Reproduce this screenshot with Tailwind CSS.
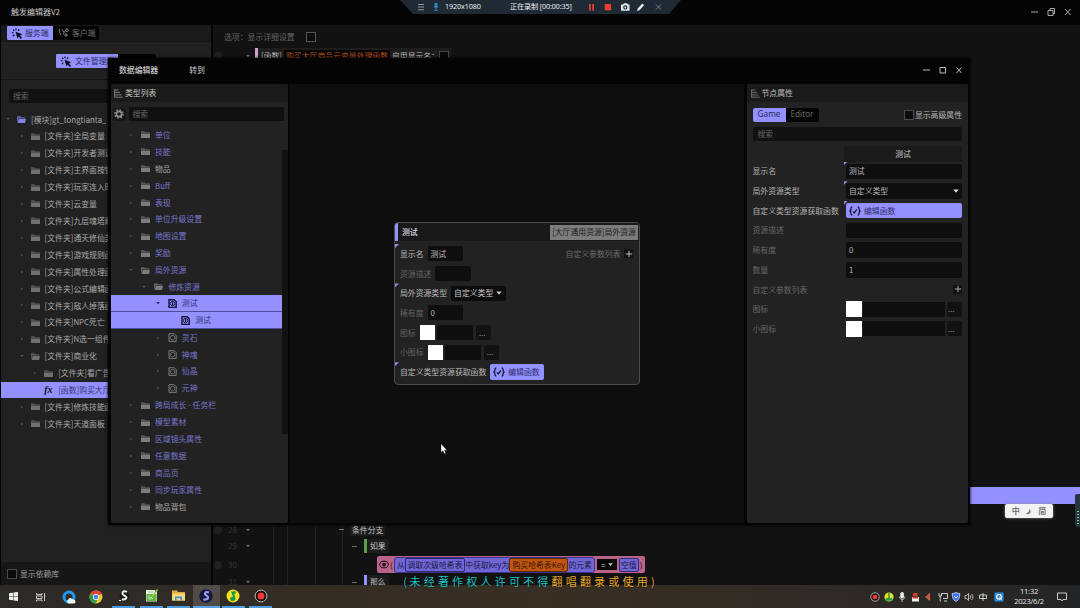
<!DOCTYPE html>
<html lang="zh-CN">
<head>
<meta charset="utf-8">
<title>触发编辑器V2</title>
<script src="https://cdn.jsdelivr.net/npm/@tailwindcss/browser@4"></script>
</head>
<body class="relative w-[1080px] h-[608px] overflow-hidden bg-[#050505] font-['Noto_Sans_CJK_SC',sans-serif] text-[7.85px] leading-none text-[#b4b4b4] whitespace-nowrap">
<svg class="hidden">
  <symbol id="folder" viewBox="0 0 9 9"><path d="M0 1.2h3.3l1 1H8.6v.9H0z" fill="currentColor" opacity=".6"/><path d="M0 3.4h9V8H0z" fill="currentColor"/></symbol>
  <symbol id="folderOpen" viewBox="0 0 9 9"><path d="M0 1.2h3.3l1 1H8v1H1.6L.6 6.5 0 7z" fill="currentColor" opacity=".7"/><path d="M1.9 3.7H9L8 8H.6z" fill="currentColor"/></symbol>
  <symbol id="doc" viewBox="0 0 9 9"><path d="M1 .7h5.2L8.2 2.7V8.4H1z" fill="none" stroke="currentColor" stroke-width="1"/><circle cx="4.6" cy="4.7" r="2.3" fill="none" stroke="currentColor" stroke-width=".8"/></symbol>
  <symbol id="docEye" viewBox="0 0 9 9"><path d="M1 .7h5.2L8.2 2.7V8.4H1z" fill="none" stroke="currentColor" stroke-width="1.4"/><circle cx="4.6" cy="4.6" r="2.2" fill="none" stroke="currentColor" stroke-width="1"/><path d="M4.6 3.2v2.8" stroke="currentColor" stroke-width="1.2"/></symbol>
  <symbol id="right" viewBox="0 0 4 4"><path d="M1.2.6 3 2 1.2 3.4z" fill="currentColor"/></symbol>
  <symbol id="down" viewBox="0 0 4 4"><path d="M.2 1h3.6L2 3.2z" fill="currentColor"/></symbol>
  <symbol id="click" viewBox="0 0 12 12"><path d="M4.4 4.2 11.8 6.800 9.300 8.2l2.200 2.600-1.400 1.100-2.100-2.700-1.500 2.300z" fill="currentColor"/><path d="M4.9.6v1.9M1.700 1.700l1.400 1.500M.3 5.2h2M1.400 8.9l1.700-1.600M8.400 1.600 7 3" stroke="currentColor" stroke-width="1.3" fill="none"/></symbol>
  <symbol id="braces" viewBox="0 0 12 10"><path d="M3.4.8C2 .8 2 1.5 2 2.6 2 4 1.8 4.7.6 5 1.8 5.3 2 6 2 7.4c0 1.1 0 1.8 1.4 1.8M8.6.8C10 .8 10 1.5 10 2.6c0 1.4.2 2.1 1.4 2.4C10.2 5.3 10 6 10 7.4c0 1.1 0 1.8-1.4 1.8M4 5.3l1.3 1.6 2.6-3.5" fill="none" stroke="currentColor" stroke-width="1.3"/></symbol>
  <symbol id="list" viewBox="0 0 9 9"><path d="M.6.5v7.9M.6 1h4M.6 3.4h5.5M.6 5.9h7M.6 8.2h8.2" stroke="currentColor" stroke-width=".9" fill="none"/></symbol>
  <symbol id="plus" viewBox="0 0 8 8"><path d="M4 .8v6.400M.8 4h6.400" stroke="currentColor" stroke-width="1" fill="none"/></symbol>
</svg>

<!-- main window -->
<div class="flex flex-col w-[1080px] h-[585px]">
  <header class="flex items-center h-[25px] pl-[11px] pr-[8px] pb-[1px] text-[8px] text-[#c9c9c9]">
    <span>触发编辑器V2</span>
    <svg class="ml-auto w-[42px] h-[10px]" viewBox="0 0 42 10" fill="none" stroke="#aaa" stroke-width="1"><path d="M1 5h7M18 3.5h5v5h-5zM20 3.5V1.5h4.500v5H23M35 2l5.500 6M40.500 2 35 8"/></svg>
  </header>
  <div class="flex flex-1 min-h-0">
    <aside class="flex flex-col w-[210px] ml-[1px] bg-[#212121] shrink-0">
      <div class="flex items-start h-[17px] pl-[6px] pt-[1px] bg-[#1a1a1a] border-b border-[#151515]">
        <div class="flex items-center gap-[2px] w-[46px] h-[14px] pl-[4px] bg-[#9391ff] text-[#2b2a5c] rounded-l-[1px]"><svg class="w-[12px] h-[11px] text-[#0b0b20]"><use href="#click"/></svg>服务端</div>
        <div class="flex items-center gap-[3px] w-[46px] h-[14px] pl-[5px] bg-[#030303] text-[#707070] rounded-r-[2px]"><svg class="w-[11px] h-[10px]" viewBox="0 0 11 10" fill="none" stroke="#888" stroke-width=".9"><path d="M1.500 1C.5 3.500 2 5 3 7M4 1.500l2 3M8 1.500l-3 5M8 5v4M6 7h4"/><circle cx="9" cy="2.300" r="1.300"/></svg>客户端</div>
      </div>
      <div class="flex items-start h-[38px] pt-[12px] pl-[55px] border-b border-[#151515]">
        <div class="flex items-center gap-[3px] w-[62px] h-[14px] pl-[4px] bg-[#9391ff] text-[#2b2a5c] rounded-l-[1px]"><svg class="w-[12px] h-[11px] text-[#0b0b20]"><use href="#click"/></svg>文件管理器</div>
        <div class="w-[38px] h-[14px] bg-[#030303] rounded-r-[2px]"></div>
      </div>
      <div class="flex items-center h-[14px] mt-[9px] ml-[8px] mr-[6px] pl-[4px] bg-[#111] text-[#666] rounded-[2px]">搜索</div>
      <div id="files" class="mt-[8px] flex-1 overflow-hidden text-[#a9a9a9]"></div>
      <div class="flex items-center gap-[3px] h-[23px] pl-[6px] bg-[#161616] text-[#a0a0a0]"><span class="w-[10px] h-[10px] border border-[#4a4a4a] bg-[#0b0b0b]"></span>显示依赖库</div>
    </aside>

    <main class="flex flex-col flex-1 min-w-0 ml-[2px] bg-[#121212] overflow-hidden">
      <div class="flex items-center h-[23px] pl-[11px] text-[#666]"><span>选项：</span><span>显示详细设置</span><span class="w-[10px] h-[10px] ml-[11px] border border-[#555] bg-[#0c0c0c]"></span></div>
      <div class="flex items-center h-[16px]">
        <span class="w-[8px] h-[8px] ml-[1px] rounded-full bg-[#202020]"></span>
        <svg class="w-[4px] h-[4px] ml-[24px] text-[#777]"><use href="#down"/></svg>
        <div class="flex items-center h-[16px] ml-[5px] pl-[3px] w-[196px] border-l-[3px] border-[#d2a0d0] bg-[#1d1d1d] text-[#bbb]">[函数]<span class="flex items-center justify-center w-[106px] h-[13px] mx-[2px] bg-[#050505] text-[#b4501c]">购买大厅商品云变量处理函数</span>启用显示名：<span class="w-[10px] h-[10px] border border-[#444] bg-[#080808]"></span></div>
      </div>
      <div class="flex flex-1 items-end"><div class="w-full h-[17px] bg-[#9391ff]"></div></div>
      <div class="h-[17px]"></div>
      <div class="grid grid-cols-[60px_14px_28px_27px_13px_1fr] h-[64px] text-[#353535]">
        <div class="flex flex-col">
          <div class="flex items-center h-[17px]"><span class="w-[8px] h-[8px] ml-[1px] mr-[6px] rounded-full bg-[#202020]"></span><span class="w-[14px] text-[8px]">28</span><svg class="w-[4px] h-[4px] ml-[4px] text-[#777]"><use href="#down"/></svg></div>
          <div class="flex items-center h-[16px] pl-[15px]"><span class="w-[14px] text-[8px]">29</span><svg class="w-[4px] h-[4px] ml-[4px] text-[#777]"><use href="#down"/></svg></div>
          <div class="flex items-center h-[21px]"><span class="w-[8px] h-[8px] ml-[1px] mr-[6px] rounded-full bg-[#202020]"></span><span class="text-[8px]">30</span></div>
          <div class="flex items-center h-[14px] pl-[15px]"><span class="w-[14px] text-[8px]">31</span><svg class="w-[4px] h-[4px] ml-[4px] text-[#777]"><use href="#down"/></svg></div>
        </div>
        <div class="border-l border-[#222]"></div><div class="border-l border-[#222]"></div><div class="border-l border-[#222]"></div><div class="border-l border-[#222]"></div>
        <div class="flex flex-col -ml-[16px] text-[#c4c4c4]">
          <div class="flex items-center h-[17px]"><span class="w-[5px] h-px bg-[#777]"></span><span class="ml-[6px] bg-[#1d1d1d] px-[2px] py-[3px]">条件分支</span></div>
          <div class="flex items-center h-[16px] pl-[13px]"><span class="w-[5px] h-px bg-[#666]"></span><span class="flex items-center h-[14px] ml-[7px] pl-[3px] pr-[3px] border-l-[3px] border-[#5d9c4b] bg-[#1d1d1d]">如果</span></div>
          <div class="flex items-center h-[21px] pl-[38px] text-[#1d1b45]">
            <div class="flex items-center w-[268px] h-[17px] px-[2px] bg-[#b9628a] rounded-[2px]">
              <svg class="w-[10px] h-[9px] shrink-0" viewBox="0 0 10 9" fill="none" stroke="#1b0b16"><ellipse cx="5" cy="4.500" rx="4.300" ry="3.300"/><circle cx="5" cy="4.500" r="1.400" fill="#1b0b16"/></svg>
              <span class="w-[3px] ml-[1px] mr-[1px] text-[#1b0b16]">(</span>
              <div class="flex items-center justify-between shrink-0 w-[201px] h-[16px] px-[2px] bg-[#7166d6] border border-[#3a348c] rounded-[3px]">从<span class="flex items-center px-[1.5px] h-[14px] border border-[#2e2972] rounded-[2px]">调取次级哈希表</span>中获取key为<span class="flex items-center px-[2px] h-[14px] bg-[#c3560f] border border-[#5a2808] rounded-[2px] text-[#3a1603]">购买哈希表Key</span>的元素</div>
              <div class="flex items-center justify-center gap-[2px] w-[20px] h-[11px] mx-[2px] bg-[#080808] text-[#ccc]"><span>=</span><svg class="w-[5px] h-[5px]"><use href="#down"/></svg></div>
              <span class="flex items-center h-[14px] px-[1px] bg-[#7166d6] border border-[#2e2972] rounded-[2px]">空值</span><span class="ml-[1px] text-[#1b0b16]">)</span>
            </div>
          </div>
          <div class="flex items-center h-[14px] pl-[13px]"><span class="w-[5px] h-px bg-[#666]"></span><span class="flex items-center h-[14px] ml-[7px] pl-[3px] pr-[3px] border-l-[3px] border-[#9391ff] bg-[#1d1d1d]">那么</span></div>
        </div>
      </div>
    </main>
  </div>
</div>

<!-- taskbar -->
<footer class="flex h-[23px] w-[1080px] bg-linear-to-r from-[#2c2a27] via-[#392f24] to-[#242526]">
  <div class="flex w-[275px] shrink-0">
    <div class="flex items-center justify-center w-[27px]"><svg class="w-[9px] h-[9px]" viewBox="0 0 9 9" fill="#eee"><path d="M0 1.300 4 .7v3.500H0zM4.500.6 9 0v4.200H4.500zM0 4.700h4v3.600L0 7.700zM4.500 4.700H9V9l-4.500-.6z"/></svg></div>
    <div class="flex items-center justify-center w-[27.500px]"><svg class="w-[10px] h-[10px]" viewBox="0 0 10 10" fill="none" stroke="#ddd" stroke-width=".9"><path d="M.5 1v1.500h5.500V1M.5 4h5.500v2.500H.5zM.5 9.500V8h5.500v1.500M8.500 1v8M8 4h1.500"/></svg></div>
    <div class="flex items-center justify-center w-[28px]"><svg class="w-[14px] h-[14px]" viewBox="0 0 14 14"><circle cx="7" cy="7" r="5" fill="none" stroke="#1f9af0" stroke-width="3"/><path d="M6.500 9.500c.3-2 3-2 3.500-.2 2-.5 3.500.8 3.500 2.200s-1 2-2 2H7c-2.300-.2-2.300-3.500-.5-4z" fill="#f4f4f4"/></svg></div>
    <div class="flex items-center justify-center w-[27.500px]"><svg class="w-[14px] h-[14px]" viewBox="0 0 14 14"><circle cx="7" cy="7" r="6.500" fill="#f4c430"/><path d="M7 7 1.400 3.700A6.500 6.500 0 0 1 12.600 3.700z" fill="#dc4437"/><path d="M7 7 1.400 3.700A6.500 6.500 0 0 0 6.500 13.500L9 9z" fill="#2f9e4f"/><circle cx="7" cy="7" r="3" fill="#fff"/><circle cx="7" cy="7" r="2.300" fill="#4285f4"/></svg></div>
    <div class="flex items-center justify-center w-[27.500px]"><div class="flex flex-col items-center justify-center w-[23px] h-full border-b-2 border-[#4f9be0]"><svg class="w-[12px] h-[12px]" viewBox="0 0 12 12"><circle cx="6.500" cy="6" r="5" fill="#191919"/><path d="M9 2C5-.2 2.500 3.500 6.500 5.600S7.500 10 3.800 9.300" fill="none" stroke="#eee" stroke-width="1.900"/><path d="M1 10.500h2" stroke="#eee"/></svg></div></div>
    <div class="flex items-center justify-center w-[27.500px]"><div class="flex items-center justify-center w-[23px] h-full border-b-2 border-[#4f9be0]"><svg class="w-[13px] h-[13px]" viewBox="0 0 13 13"><path d="M1 1h9v2h2v9.500H1z" fill="#e8eed8"/><path d="M1.500 5h10v7h-10z" fill="#62b445"/><path d="M3 3h5" stroke="#8a9" stroke-width=".7"/><path d="M12.500.5 7 7.500" stroke="#9ccf50" stroke-width="1.300"/><path d="M4 6.500v3.500h2V8l2 2" fill="none" stroke="#dff5c0" stroke-width=".8"/></svg></div></div>
    <div class="flex items-center justify-center w-[27.500px]"><div class="flex items-center justify-center w-[23px] h-full border-b-2 border-[#4f9be0]"><svg class="w-[13px] h-[11px]" viewBox="0 0 13 11"><path d="M0 .5h5l1 1.500h7v8.500H0z" fill="#e2ad3a"/><path d="M0 3.500h13v7H0z" fill="#f8d978"/><path d="M3 6.500h7v4H8.500V8.300h-4v2.200H3z" fill="#3b94d9"/></svg></div></div>
    <div class="flex items-center justify-center w-[27px] bg-[#514c47] border-b-2 border-[#5aa5e8]"><svg class="w-[14px] h-[14px]" viewBox="0 0 13 13"><circle cx="6.500" cy="6.500" r="6.300" fill="#15183c"/><path d="M9.300 3.300C6 1.800 4 4.500 7 6.200S8 10.300 4 9.700" fill="none" stroke="#9a9cf5" stroke-width="2"/></svg></div>
    <div class="flex items-center justify-center w-[27.500px]"><div class="flex items-center justify-center w-[23px] h-full border-b-2 border-[#4f9be0]"><svg class="w-[14px] h-[14px]" viewBox="0 0 14 14"><circle cx="7" cy="7" r="6.500" fill="#f5df20"/><path d="M5 2.500c1.500.2 3 0 4-1L10 4l-1.800 1.300L9.500 9c.2 4-5.700 4-5.400.8C4.300 8.400 5.600 7.600 7 7.800L6 5z" fill="#14994a"/></svg></div></div>
    <div class="flex items-center justify-center w-[27.500px]"><div class="flex items-center justify-center w-[23px] h-full border-b-2 border-[#4f9be0]"><svg class="w-[14px] h-[14px]" viewBox="0 0 14 14"><circle cx="7" cy="7" r="5.900" fill="#120c0c" stroke="#c9c9c9" stroke-width=".9"/><circle cx="7" cy="7" r="3.500" fill="#f03a34"/></svg></div></div>
  </div>
  <div class="flex items-center ml-auto pr-[13px]">
    <svg class="w-[136px] h-[12px]" viewBox="868 0 136 12">
      <circle cx="875" cy="6" r="4.200" fill="#150d0d" stroke="#ccc" stroke-width=".8"/><circle cx="875" cy="6" r="2.300" fill="#ee3b36"/>
      <circle cx="889" cy="6" r="4.600" fill="#e5dc2b"/><path d="M889 2v6M886 9c0-2 6-2 6 0z" stroke="#2a9c48" stroke-width="1.500" fill="#2a9c48"/>
      <rect x="900.300" y="1" width="3.600" height="6.500" rx="1.800" fill="#eee"/><path d="M899.500 5.500c0 4 5.300 4 5.300 0M902 8.500v2.500" stroke="#ddd" fill="none" stroke-width=".8"/>
      <path d="M913 2h4.500v3H913z" fill="#d43b2d"/><path d="M912 6h7v4.500h-7z" fill="#eee"/><path d="M912.500 5.500h5.500v2h-5.500z" fill="#d43b2d"/>
      <path d="M925 6l5-4v8z" fill="#e2604c"/><path d="M928 4v4" stroke="#752" />
      <path d="M941.500 2.500h6v5h-4.500M944 10h3M939 2v3h2.500V2M940.200 5v5.500" stroke="#ddd" fill="none" stroke-width=".9"/>
      <path d="M956 1.500c1.500.8 2.500 1 3.800 1 0 4-1 6.500-3.800 8-2.800-1.500-3.800-4-3.800-8 1.300 0 2.300-.2 3.800-1z" fill="#3a6ff0" stroke="#d8e2ff" stroke-width=".8"/><path d="m954 5 2 2 2-2" stroke="#fff" fill="none"/>
      <path d="M965 4.500h1.500l2-2v7l-2-2H965zM970 4.200c1 1 1 2.600 0 3.600M971.700 3c1.600 1.800 1.600 4.200 0 6" stroke="#ddd" fill="none" stroke-width=".8"/>
      <path d="M979.500 4h7v3.500h-7zM983 2v8" stroke="#ddd" fill="none" stroke-width=".9"/>
      <rect x="994.500" y="1.500" width="9" height="9" rx="1" fill="#2c8de0"/><circle cx="999" cy="5.800" r="2.300" fill="none" stroke="#fff" stroke-width="1.100"/><path d="m999.500 6.500 2 2.300" stroke="#fff"/>
    </svg>
    <div class="flex flex-col items-center gap-[3px] w-[50px] text-[7.500px] text-[#e6e6e6] font-['Open_Sans',sans-serif] tracking-[-0.2px]"><span>11:32</span><span>2023/6/2</span></div>
    <svg class="w-[10px] h-[10px] ml-[3px]" viewBox="0 0 10 10" fill="none" stroke="#ddd" stroke-width=".9"><path d="M.5 1h9v6.500H6L5 9 4 7.500H.5z"/></svg>
  </div>
</footer>

<!-- data editor window -->
<section class="absolute left-[108px] top-[58px] w-[862px] h-[467px] flex flex-col bg-[#040404] shadow-[0_0_3px_#000]">
  <header class="flex items-center h-[24px] pl-[11px] pr-[7px] text-[#cfcfcf]">
    <span class="font-medium">数据编辑器</span><span class="ml-[31px]">转到</span>
    <svg class="ml-auto w-[40px] h-[8px]" viewBox="0 0 40 8" fill="none" stroke="#bbb" stroke-width="1"><path d="M0 4h7M17 1.500h5.500v5.500h-5.500zM33.500 1.500l5 5.500M38.500 1.500 33.500 7"/></svg>
  </header>
  <div class="flex flex-1 min-h-0 pl-[3px] pr-[2px] pb-[2px] gap-[2.500px] pt-[2px]">
    <div class="flex flex-col w-[176.500px] shrink-0 bg-[#222] rounded-[2px] overflow-hidden">
      <div class="flex items-center gap-[2px] h-[18px] pl-[3px] bg-[#1a1a1a] text-[#c2c2c2]"><svg class="w-[9px] h-[9px] text-[#888]"><use href="#list"/></svg>类型列表</div>
      <div class="flex items-center h-[14px] mt-[5px] pl-[1.5px] pr-[4px]">
        <span class="flex items-center justify-center w-[13px] h-[13px] bg-[#171717] rounded-[2px]"><svg class="w-[10px] h-[10px]" viewBox="0 0 10 10" fill="none"><circle cx="5" cy="5" r="2.700" stroke="#909090" stroke-width="1.800"/><circle cx="5" cy="5" r="4.200" stroke="#909090" stroke-width="1.200" stroke-dasharray="1.700 1.600"/></svg></span>
        <span class="flex items-center flex-1 h-[14px] ml-[3px] pl-[4px] bg-[#101010] text-[#686868] rounded-[1px]">搜索</span>
      </div>
      <div class="flex flex-1 min-h-0 mt-[5.5px]">
        <div id="types" class="w-[171px]"></div>
        <div class="flex-1 pt-[23.5px]"><div class="h-[284px] bg-[#111]"></div></div>
      </div>
    </div>

    <div class="flex-1 flex bg-[#0e0e0e] pl-[104px] pt-[138px]">
      <div class="flex flex-col w-[246px] h-[163px] border-[1.500px] border-[#4b4b4b] rounded-[4px] bg-[#222] overflow-hidden">
        <div class="flex items-center h-[18px] border-l-[3px] border-[#9391ff] bg-[#191919] shrink-0 text-[#d8d8d8] pl-[4px] pr-[1px] font-medium">测试<span class="flex items-center justify-center w-[88px] h-[15px] ml-auto bg-[#7c7c7c] text-[#1c1c1c] font-normal">[大厅通用资源]局外资源</span></div>
        <div id="node" class="pt-[3px]"></div>
      </div>
    </div>

    <div class="flex flex-col w-[221.500px] shrink-0 bg-[#222] rounded-[2px] overflow-hidden">
      <div class="flex items-center gap-[2px] h-[18px] pl-[4px] bg-[#1a1a1a] text-[#c2c2c2] shrink-0"><svg class="w-[9px] h-[9px] text-[#777]"><use href="#list"/></svg>节点属性</div>
      <div class="flex items-center h-[15px] mt-[5px] pl-[6px] pr-[6px] font-['Noto_Sans','Noto_Sans_CJK_SC',sans-serif]">
        <span class="flex items-center justify-center w-[33px] h-[14px] bg-[#9391ff] text-[#2b2a5c] text-[8.200px] rounded-l-[2px]">Game</span><span class="flex items-center justify-center w-[33px] h-[14px] bg-[#030303] text-[#666] text-[8.200px] rounded-r-[2px]">Editor</span>
        <span class="w-[10px] h-[10px] ml-auto mr-[1px] border border-[#4a4a4a] bg-[#0c0c0c]"></span><span class="font-['Noto_Sans_CJK_SC',sans-serif]">显示高级属性</span>
      </div>
      <div class="flex items-center h-[13.500px] mt-[5px] ml-[6px] mr-[6px] pl-[5px] bg-[#111] text-[#666] rounded-[2px]">搜索</div>
      <div class="flex h-[16px] mt-[5px] pr-[6px] justify-end"><span class="flex items-center justify-center w-[118px] bg-[#1a1a1a] text-[#c8c8c8]">测试</span></div>
      <div id="props"></div>
    </div>
  </div>
</section>

<!-- recorder bar -->
<div class="absolute left-[400px] top-0 w-[281px] h-[14px] flex items-center pl-[17px] pr-[18px] bg-[#202a34] [clip-path:polygon(0_0,100%_0,269px_100%,13px_100%)] font-['Noto_Sans','Noto_Sans_CJK_SC',sans-serif] text-[7.200px] text-[#e8eef2]">
  <svg class="w-[8px] h-[8px]" viewBox="0 0 8 8" stroke="#a8b2ba" stroke-width=".8"><path d="M1 1.500h6M1 4h6M1 6.800h6"/></svg>
  <svg class="w-[6px] h-[8px] ml-[8px]" viewBox="0 0 6 8"><path d="M1.500 0h3v3l1 1.500h-5l1-1.500zM2.500 4.500h1V8h-1zM1 7h4v.8H1z" fill="#2d86c8"/></svg>
  <span class="ml-[6px] tracking-[-0.100px] w-[36px]">1920x1080</span>
  <span class="ml-[29px] w-[64px] tracking-[-0.150px]">正在录制 [00:00:35]</span>
  <svg class="w-[76px] h-[10px] ml-auto" viewBox="587 0 76 10"><path d="M589 2h1.800v6.500H589zM592.200 2h1.800v6.500h-1.800z" fill="#e8402f"/><path d="M604.800 2h6.300v6.300h-6.300z" fill="#e8402f"/><path d="M621 2.500h2l1-1.300h3l1 1.300h1.500v6.200H621z" fill="#dfe5e8"/><circle cx="625.300" cy="5.400" r="2.100" fill="#202a34"/><circle cx="625.300" cy="5.400" r="1" fill="#dfe5e8"/><path d="M637 9l.7-2.500 4.600-5 1.800 1.700-4.600 5z" fill="#dfe5e8"/><path d="m656 2.500 5 5M661 2.500l-5 5" stroke="#8a949c" stroke-width=".8"/></svg>
</div>

<!-- input method toolbar and level meter -->
<div class="absolute left-[1005px] top-[504px] w-[48px] h-[14px] flex items-center justify-around px-[4px] bg-[#f2f2f2] rounded-[2px] text-[#777] text-[8px] font-bold shadow-[0_0_3px_#888]"><span>中</span><svg class="w-[7px] h-[7px]" viewBox="0 0 7 7"><path d="M4 .5c.8 2.800-.5 4.500-3.500 5C4 8 8 4 4 .5z" fill="#777"/></svg><span>简</span></div>
<div class="absolute left-[1075px] top-[494px] w-[5px] h-[33px] bg-[#27363e] rounded-l-[2px] pt-[17px] pl-[1.500px]"><div class="w-[2px] h-[14px] bg-[repeating-linear-gradient(#7fd0a0_0_1px,#27363e_1px_3px)]"></div></div>

<!-- caption over the desktop -->
<div class="absolute left-[395px] top-[574px] h-[14px] flex items-center text-[11px] tracking-[3.200px] text-[#1fc4c9] [text-shadow:0_0_1px_#000]"><span class="w-[12px] text-right tracking-normal">(</span><span class="ml-[2.5px]">未经著作权人许可不得</span><span class="text-[#e8a92c]">翻唱翻录或使用)</span></div>

<svg class="absolute left-[440px] top-[443px] w-[8px] h-[12px]" viewBox="0 0 8 12"><path d="M1 .8v8.700l2-1.800 1.300 3 1.500-.6L4.500 7.200H7z" fill="#fff" stroke="#111" stroke-width=".4"/></svg>

<script>
const icon = (id, cls) => `<svg class="${cls}"><use href="#${id}"/></svg>`;

// [depth, icon, arrow, label, state]
const fileRows = [
  [0,'folderOpen','down','[模块]gt_tongtianta_','root'],
  [1,'folder','right','[文件夹]全局变量'],[1,'folder','right','[文件夹]开发者测试'],[1,'folder','right','[文件夹]主界面按钮'],
  [1,'folder','right','[文件夹]玩家连入时'],[1,'folder','right','[文件夹]云变量'],[1,'folder','right','[文件夹]九层魂塔刷'],
  [1,'folder','right','[文件夹]通天修仙类'],[1,'folder','right','[文件夹]游戏规则函'],[1,'folder','right','[文件夹]属性处理函'],
  [1,'folder','right','[文件夹]公式编辑函'],[1,'folder','right','[文件夹]敌人掉落函'],[1,'folder','right','[文件夹]NPC死亡'],
  [1,'folder','right','[文件夹]N选一组件'],[1,'folderOpen','down','[文件夹]商业化'],[2,'folder','right','[文件夹]看广告'],
  [2,'fx','','[函数]购买大厅','sel'],[1,'folder','right','[文件夹]修炼技能函'],[1,'folder','right','[文件夹]天道面板']
];
document.getElementById('files').innerHTML = fileRows.map(([d,ic,ar,t,s]) => `
  <div class="flex items-center h-[16.92px] ${s==='sel' ? 'bg-[#9391ff] text-[#3a3874]' : ''}" style="padding-left:${5+d*13.6}px">
    <span class="w-[11px] flex text-[#555]">${ar ? icon(ar,'w-[4px] h-[4px]') : ''}</span>
    ${ic==='fx' ? `<span class="w-[9px] font-['Liberation_Serif',serif] italic font-bold text-[10px] text-[#101030]">fx</span>` : icon(ic, s==='root' ? 'w-[9px] h-[9px] text-[#8583ea]' : 'w-[9px] h-[9px] text-[#707070]')}
    <span class="ml-[5px]">${t}</span>
  </div>`).join('');

const typeRows = [
  [0,'folder','right','单位'],[0,'folder','right','技能'],[0,'folder','right','物品','plain'],[0,'folder','right','Buff'],
  [0,'folder','right','表现'],[0,'folder','right','单位升级设置'],[0,'folder','right','地图设置'],[0,'folder','right','奖励'],
  [0,'folderOpen','down','局外资源'],[1,'folderOpen','down','修炼资源'],[2,'docEye','down','测试','sel'],[3,'docEye','','测试','sel'],
  [2,'doc','right','灵石'],[2,'doc','right','神魂'],[2,'doc','right','仙晶'],[2,'doc','right','元神'],
  [0,'folder','right','跨局成长 - 任务栏'],[0,'folder','right','模型素材'],[0,'folder','right','区域镜头属性'],[0,'folder','right','任意数据'],
  [0,'folder','right','商品页'],[0,'folder','right','同步玩家属性'],[0,'folder','right','物品背包','plain']
];
document.getElementById('types').innerHTML = typeRows.map(([d,ic,ar,t,s]) => `
  <div class="flex items-center h-[16.9px] ${s==='sel' ? 'bg-[#9391ff] text-[#34326e] border-b border-[#4f4d99]' : s==='plain' ? 'text-[#a9a9a9]' : 'text-[#7a76cc]'}" style="padding-left:${18+d*13.4}px">
    <span class="w-[12px] flex ${s==='sel' ? 'text-[#222055]' : 'text-[#555]'}">${ar ? icon(ar,'w-[4px] h-[4px]') : ''}</span>
    ${icon(ic, s==='sel' ? 'w-[9px] h-[9px] text-[#15133a]' : 'w-[9px] h-[9px] text-[#7c7c7c]')}
    <span class="ml-[5px]">${t}</span>
  </div>`).join('');

const mark = '<span class="self-start w-[4px] h-[4px] bg-[#8f8de8] [clip-path:polygon(0_0,100%_0,0_100%)]"></span>';
const noMark = '<span class="w-[4px]"></span>';
const nodeRows = [
  [1,'显示名','<span class="flex items-center w-[35px] h-[15px] ml-[4px] pl-[3px] bg-[#0e0e0e] rounded-[2px]">测试</span><span class="ml-auto text-[#6a6a6a]">自定义参数列表</span><span class="flex items-center justify-center w-[9px] h-[9px] ml-[3.500px] mr-[6px] bg-[#111] text-[#bbb]">'+icon('plus','w-[8px] h-[8px]')+'</span>'],
  [0,'资源描述','<span class="w-[36px] h-[15px] ml-[4px] bg-[#0e0e0e] rounded-[2px]"></span>'],
  [1,'局外资源类型','<span class="flex items-center gap-[3px] w-[55px] h-[15px] ml-[4px] pl-[3px] bg-[#0c0c0c] text-[#c8c8c8] rounded-[2px]">自定义类型'+icon('down','w-[6px] h-[6px]')+'</span>'],
  [0,'稀有度','<span class="flex items-center w-[35px] h-[15px] ml-[4px] pl-[3px] bg-[#0e0e0e] text-[#b4b4b4] rounded-[2px]">0</span>'],
  [0,'图标','<span class="w-[15.500px] h-[15.500px] ml-[4px] bg-white"></span><span class="w-[36px] h-[15px] ml-[2px] bg-[#0e0e0e]"></span><span class="flex items-center justify-center w-[15px] h-[15px] ml-[2.500px] bg-[#121212] text-[#999] rounded-[2px] pr-[2px]">...</span>'],
  [0,'小图标','<span class="w-[15.500px] h-[15.500px] ml-[4px] bg-white"></span><span class="w-[36px] h-[15px] ml-[2px] bg-[#0e0e0e]"></span><span class="flex items-center justify-center w-[15px] h-[15px] ml-[2.500px] bg-[#121212] text-[#999] rounded-[2px] pr-[2px]">...</span>'],
  [1,'自定义类型资源获取函数','<span class="flex items-center gap-[3px] w-[54px] h-[15.500px] ml-[4px] pl-[3px] bg-[#9391ff] text-[#2f2d68] rounded-[2px]">'+icon('braces','w-[12px] h-[10px] text-[#15133a]')+'编辑函数</span>']
];
document.getElementById('node').innerHTML = nodeRows.map(([on,label,body]) => `
  <div class="flex items-center h-[19.7px] ${on ? 'text-[#b8b8b8]' : 'text-[#626262]'}">${on ? mark : noMark}<span class="ml-[1px]">${label}</span>${body}</div>`).join('');

const field = (inner) => `<span class="flex items-center w-[116px] h-[15.5px] pl-[3px] bg-[#0e0e0e] text-[#b4b4b4] rounded-[2px]">${inner}</span>`;
const picker = '<span class="w-[15.5px] h-[15.5px] bg-white"></span><span class="w-[82px] h-[15px] ml-[1.5px] bg-[#0e0e0e]"></span><span class="flex items-center w-[15px] h-[15px] ml-[2px] pl-[1px] bg-[#121212] text-[#999] rounded-[2px]">...</span>';
const propRows = [
  [1,'显示名',field('测试')],
  [1,'局外资源类型',field('自定义类型'+icon('down','w-[6px] h-[6px] ml-auto mr-[3px] text-[#ddd]'))],
  [1,'自定义类型资源获取函数','<span class="flex items-center gap-[3px] w-[116px] h-[15.5px] pl-[3px] bg-[#9391ff] text-[#2f2d68] rounded-[2px]">'+icon('braces','w-[12px] h-[10px] text-[#15133a]')+'编辑函数</span>'],
  [0,'资源描述',field('')],[0,'稀有度',field('0')],[0,'数量',field('1')],
  [0,'自定义参数列表','<span class="flex items-center justify-center w-[9px] h-[9px] ml-auto bg-[#111] text-[#aaa]">'+icon('plus','w-[8px] h-[8px]')+'</span>'],
  [0,'图标',picker],[0,'小图标',picker]
];
document.getElementById('props').innerHTML = propRows.map(([on,label,body]) => `
  <div class="flex items-center h-[19.7px] pl-[6px] pr-[6px] ${on ? 'text-[#b4b4b4]' : 'text-[#666]'}"><span class="w-[91px] shrink-0">${label}</span>${on ? mark : noMark}<span class="flex items-center flex-1 -ml-[1.5px]">${body}</span></div>`).join('');
</script>
</body>
</html>
